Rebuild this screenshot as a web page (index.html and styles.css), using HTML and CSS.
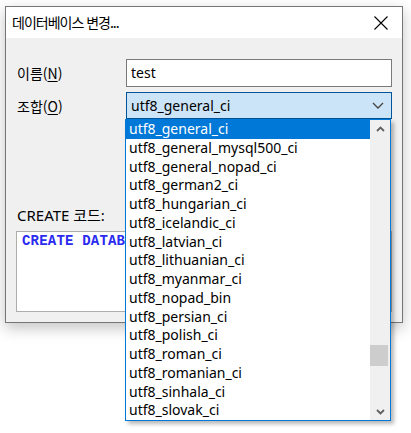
FILE: index.html
```html
<!DOCTYPE html>
<html lang="ko">
<head>
<meta charset="utf-8">
<title>데이터베이스 변경</title>
<link rel="stylesheet" href="styles.css">
</head>
<body>
<div class="window">
  <div class="titlebar">
    <span class="title">데이터베이스 변경...</span>
    <svg class="close" width="14" height="14" viewBox="0 0 14 14"><path d="M0.5 0.5 L13.5 13.5 M13.5 0.5 L0.5 13.5" stroke="#000" stroke-width="1.1" fill="none"/></svg>
  </div>
  <div class="content">
    <div class="form">
      <label class="label">이름(<u>N</u>)</label>
      <div class="input">test</div>
      <label class="label">조합(<u>O</u>)</label>
      <div class="combo">
        <span>utf8_general_ci</span>
        <svg class="chev" width="12" height="7" viewBox="0 0 12 7"><path d="M1 1 L6 6 L11 1" stroke="#444" stroke-width="1.3" fill="none"/></svg>
      </div>
    </div>
    <div class="code-label">CREATE 코드:</div>
    <div class="code"><span class="kw">CREATE DATAB</span></div>
  </div>
</div>
<div class="dropdown">
  <ul class="items">
    <li class="item selected">utf8_general_ci</li>
    <li class="item">utf8_general_mysql500_ci</li>
    <li class="item">utf8_general_nopad_ci</li>
    <li class="item">utf8_german2_ci</li>
    <li class="item">utf8_hungarian_ci</li>
    <li class="item">utf8_icelandic_ci</li>
    <li class="item">utf8_latvian_ci</li>
    <li class="item">utf8_lithuanian_ci</li>
    <li class="item">utf8_myanmar_ci</li>
    <li class="item">utf8_nopad_bin</li>
    <li class="item">utf8_persian_ci</li>
    <li class="item">utf8_polish_ci</li>
    <li class="item">utf8_roman_ci</li>
    <li class="item">utf8_romanian_ci</li>
    <li class="item">utf8_sinhala_ci</li>
    <li class="item">utf8_slovak_ci</li>
  </ul>
  <div class="scrollbar">
    <div class="sb-btn"><svg width="9" height="6" viewBox="0 0 9 6"><path d="M1 5 L4.5 1.5 L8 5" stroke="#606060" stroke-width="1.8" fill="none"/></svg></div>
    <div class="sb-track"><div class="sb-thumb"></div></div>
    <div class="sb-btn"><svg width="9" height="6" viewBox="0 0 9 6"><path d="M1 1 L4.5 4.5 L8 1" stroke="#606060" stroke-width="1.8" fill="none"/></svg></div>
  </div>
</div>
</body>
</html>
```
FILE: styles.css
```css
* { box-sizing: border-box; }
html, body { margin: 0; padding: 0; background: #fff; }
body {
  width: 411px;
  height: 433px;
  overflow: hidden;
  position: relative;
  font-family: "Noto Sans", "Noto Sans CJK KR", sans-serif;
  font-size: 14px;
  color: #000;
}
.window {
  margin: 6px 0 0 5px;
  width: 398px;
  height: 317px;
  border: 1px solid #767676;
  background: #f0f0f0;
  box-shadow: 0 5px 14px rgba(0, 0, 0, 0.24);
  display: flex;
  flex-direction: column;
}
.titlebar {
  height: 31px;
  background: #fff;
  display: flex;
  align-items: center;
  justify-content: space-between;
  padding: 0 14px 1px 6px;
}
.title {
  font-family: "Noto Sans CJK KR", sans-serif;
  font-size: 14px;
  letter-spacing: -1px;
  line-height: 20px;
}
.close { display: block; margin-top: 1px; }
.content {
  flex: 1;
  padding: 21px 10px 0 10px;
}
.form {
  display: grid;
  grid-template-columns: 110px 1fr;
  grid-template-rows: 28px 27px;
  row-gap: 5px;
  align-items: center;
}
.label {
  font-family: "Noto Sans CJK KR", sans-serif;
  font-size: 14px;
  line-height: 20px;
  padding-left: 1px;
}
.label u { text-underline-offset: 2px; }
.input {
  height: 28px;
  background: #fff;
  border: 1px solid #7a7a7a;
  padding-left: 4px;
  line-height: 25px;
}
.combo {
  height: 27px;
  background: #cce4f7;
  border: 1px solid #005499;
  padding: 0 7px 0 4px;
  display: flex;
  align-items: center;
  justify-content: space-between;
  line-height: 20px;
}
.chev { display: block; }
.code-label {
  margin-top: 86px;
  padding-left: 1px;
  line-height: 20px;
  font-size: 15px;
  font-family: "Noto Sans", "Noto Sans CJK KR", sans-serif;
}
.code {
  margin-top: 6px;
  height: 81px;
  background: #fff;
  border: 1px solid #adadad;
  padding: 1px 0 0 5px;
  font-family: "Liberation Mono", monospace;
  font-size: 14px;
  line-height: 16px;
  white-space: nowrap;
  overflow: hidden;
}
.kw {
  color: #2a2af0;
  font-weight: bold;
  letter-spacing: 0.2px;
}
.dropdown {
  position: absolute;
  left: 125px;
  top: 119px;
  width: 266px;
  height: 302px;
  background: #fff;
  border: 1px solid #0078d7;
  box-shadow: 3px 3px 4px rgba(0, 0, 0, 0.28);
  display: flex;
}
.items {
  list-style: none;
  margin: 0;
  padding: 0;
  flex: 1;
}
.item {
  height: 18.75px;
  line-height: 18.75px;
  padding-left: 3px;
  white-space: nowrap;
}
.item.selected {
  background: #0078d7;
  color: #fff;
}
.scrollbar {
  width: 20px;
  background: #f0f0f0;
  display: flex;
  flex-direction: column;
}
.sb-btn {
  height: 17px;
  display: flex;
  align-items: center;
  justify-content: center;
}
.sb-track { flex: 1; }
.sb-thumb {
  margin: 208px 0 0 0;
  width: 18px;
  height: 21px;
  background: #cdcdcd;
}
```
